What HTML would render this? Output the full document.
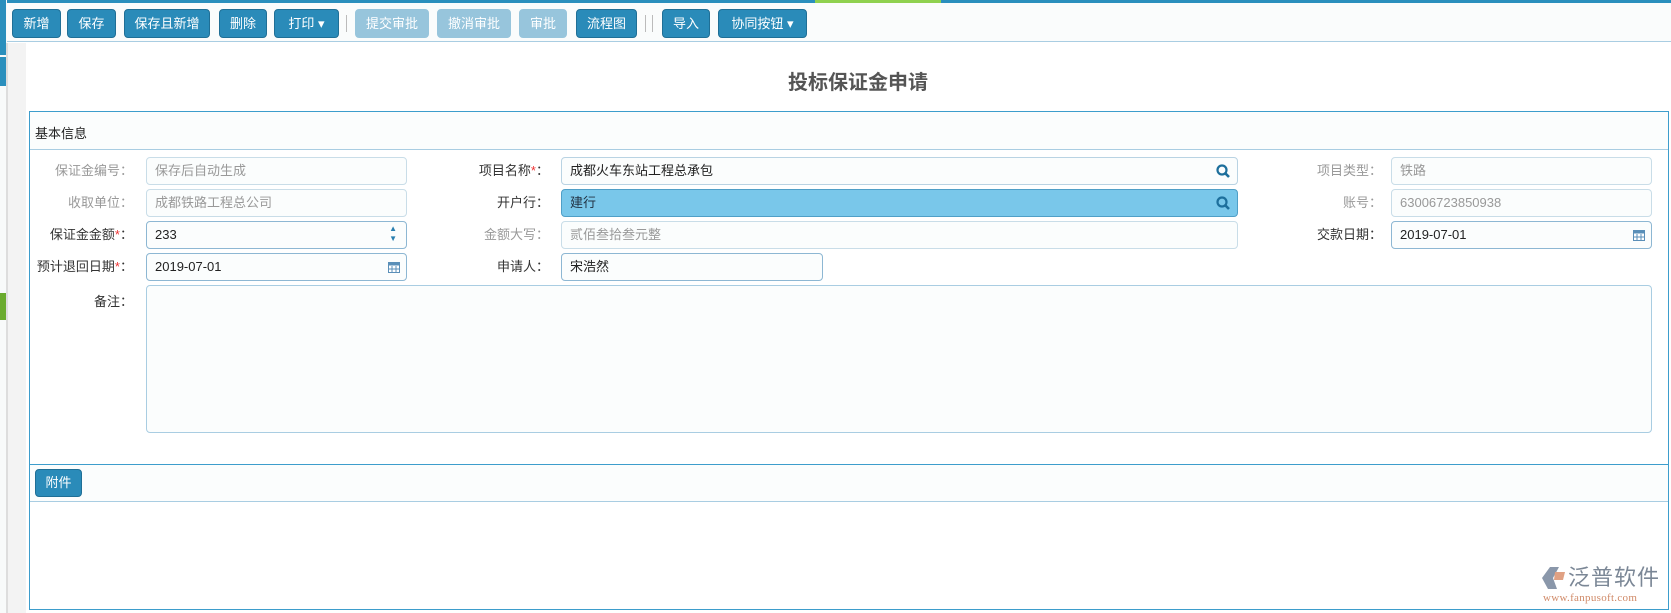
<!DOCTYPE html>
<html><head><meta charset="utf-8"><style>
*{box-sizing:border-box;margin:0;padding:0}
body{width:1671px;height:613px;overflow:hidden;background:#fff;position:relative;font-family:"Liberation Sans","Noto Sans CJK SC",sans-serif;font-size:13px;color:#333}
.a{position:absolute}
.btn{position:absolute;top:9px;height:29px;background:#2a8bb9;color:#fff;border-radius:4px;border:1px solid #1f6f96;font-size:13px;line-height:27px;text-align:center}
.dis{background:#97c5dc;border-color:#97c5dc}
.sep{position:absolute;top:15px;width:1px;height:17px;background:#bbb}
.lbl{position:absolute;text-align:right;width:130px;line-height:27px}
.g{color:#999}
.inp{position:absolute;height:28px;border:1px solid #c9dde8;border-radius:4px;background:#fbfdfd;line-height:26px;padding-left:8px;color:#999}
.act{border-color:#8db7d3;color:#222}
.star{color:#e33}
</style></head><body>
<div class="a" style="left:0;top:0;width:1671px;height:3px;background:#2a8fbd"></div>
<div class="a" style="left:815px;top:0;width:126px;height:3px;background:#8fd14f"></div>
<div class="a" style="left:0;top:3px;width:1671px;height:39px;background:#fafcfc;border-bottom:1px solid #a9cde2"></div>
<div class="a" style="left:0;top:0;width:7px;height:613px;background:#f8fafa"></div>
<div class="a" style="left:0;top:0;width:6px;height:55px;background:#2a8fbd"></div>
<div class="a" style="left:0;top:57px;width:6px;height:29px;background:#2a8fbd"></div>
<div class="a" style="left:0;top:293px;width:6px;height:27px;background:#6aab2e"></div>
<div class="a" style="left:6px;top:43px;width:20px;height:570px;background:#f3f3f3;border-left:2px solid #ddd"></div>

<div class="btn" style="left:12px;width:49px">新增</div>
<div class="btn" style="left:67px;width:49px">保存</div>
<div class="btn" style="left:124px;width:86px">保存且新增</div>
<div class="btn" style="left:219px;width:48px">删除</div>
<div class="btn" style="left:274px;width:65px">打印 ▾</div>
<div class="sep" style="left:346px"></div>
<div class="btn dis" style="left:355px;width:74px">提交审批</div>
<div class="btn dis" style="left:437px;width:74px">撤消审批</div>
<div class="btn dis" style="left:519px;width:48px">审批</div>
<div class="btn" style="left:576px;width:61px">流程图</div>
<div class="sep" style="left:645px"></div><div class="sep" style="left:652px"></div>
<div class="btn" style="left:662px;width:48px">导入</div>
<div class="btn" style="left:718px;width:89px">协同按钮 ▾</div>

<div class="a" style="left:26px;top:43px;width:1645px;height:570px;background:#fff"></div>
<div class="a" style="left:0;top:66px;width:1716px;text-align:center;font-size:20px;font-weight:bold;color:#555">投标保证金申请</div>

<div class="a" style="left:29px;top:111px;width:1640px;height:499px;border:1px solid #3d9dcc;background:#fff"></div>
<div class="a" style="left:30px;top:112px;width:1638px;height:38px;background:#fbfdfd;border-bottom:1px solid #a9cde2"></div>
<div class="a" style="left:35px;top:123px;font-size:13px;color:#222">基本信息</div>

<div class="lbl g" style="left:3px;top:157px">保证金编号：</div>
<div class="inp" style="left:146px;top:157px;width:261px">保存后自动生成</div>
<div class="lbl g" style="left:3px;top:189px">收取单位：</div>
<div class="inp" style="left:146px;top:189px;width:261px">成都铁路工程总公司</div>
<div class="lbl" style="left:3px;top:221px">保证金金额<span class="star">*</span>：</div>
<div class="inp act" style="left:146px;top:221px;width:261px">233<span class="a" style="right:9px;top:2px;font-size:8px;color:#2a7fb0;line-height:10px">▲<br>▼</span></div>
<div class="lbl" style="left:3px;top:253px">预计退回日期<span class="star">*</span>：</div>
<div class="inp act" style="left:146px;top:253px;width:261px">2019-07-01<svg class="a" style="right:6px;top:7px" width="12" height="12"><rect x="0.5" y="1.5" width="11" height="10" fill="#fff" stroke="#5a8fb8"/><rect x="0.5" y="1.5" width="11" height="3" fill="#5a8fb8"/><path d="M4 5v6M8 5v6M1 8h10" stroke="#5a8fb8"/></svg></div>
<div class="lbl" style="left:3px;top:288px">备注：</div>
<div class="inp" style="left:146px;top:285px;width:1506px;height:148px;border-color:#a9cde2"></div>

<div class="lbl" style="left:419px;top:157px">项目名称<span class="star">*</span>：</div>
<div class="inp act" style="left:561px;top:157px;width:677px;border-color:#b9d3e3">成都火车东站工程总承包<svg class="a" style="right:7px;top:6px" width="14" height="14"><circle cx="6" cy="6" r="4.5" fill="none" stroke="#1d6f9c" stroke-width="2.2"/><path d="M9.3 9.3l3.7 3.7" stroke="#1d6f9c" stroke-width="2.6"/></svg></div>
<div class="lbl" style="left:419px;top:189px">开户行：</div>
<div class="inp" style="left:561px;top:189px;width:677px;background:#79c7ea;border-color:#4f9fc7;color:#234">建行<svg class="a" style="right:7px;top:6px" width="14" height="14"><circle cx="6" cy="6" r="4.5" fill="none" stroke="#1d6f9c" stroke-width="2.2"/><path d="M9.3 9.3l3.7 3.7" stroke="#1d6f9c" stroke-width="2.6"/></svg></div>
<div class="lbl g" style="left:419px;top:221px">金额大写：</div>
<div class="inp" style="left:561px;top:221px;width:677px">贰佰叁拾叁元整</div>
<div class="lbl" style="left:419px;top:253px">申请人：</div>
<div class="inp act" style="left:561px;top:253px;width:262px">宋浩然</div>

<div class="lbl g" style="left:1252px;top:157px">项目类型：</div>
<div class="inp" style="left:1391px;top:157px;width:261px">铁路</div>
<div class="lbl g" style="left:1252px;top:189px">账号：</div>
<div class="inp" style="left:1391px;top:189px;width:261px">63006723850938</div>
<div class="lbl" style="left:1252px;top:221px">交款日期：</div>
<div class="inp act" style="left:1391px;top:221px;width:261px">2019-07-01<svg class="a" style="right:6px;top:7px" width="12" height="12"><rect x="0.5" y="1.5" width="11" height="10" fill="#fff" stroke="#5a8fb8"/><rect x="0.5" y="1.5" width="11" height="3" fill="#5a8fb8"/><path d="M4 5v6M8 5v6M1 8h10" stroke="#5a8fb8"/></svg></div>

<div class="a" style="left:30px;top:464px;width:1638px;height:38px;background:#fbfdfd;border-top:1px solid #3d9dcc;border-bottom:1px solid #a9cde2"></div>
<div class="btn" style="left:35px;top:469px;width:47px;height:28px;line-height:26px">附件</div>

<svg class="a" style="left:1541px;top:566px" width="26" height="24"><path d="M9 1h9l-6 11 4 11H7L1 12z" fill="#8a97aa"/><path d="M14 6h10l-2 8h-9z" fill="#e0a183"/></svg>
<div class="a" style="left:1568px;top:562px;font-size:22px;color:#7b8796;font-family:'Noto Sans CJK SC',sans-serif;line-height:28px;letter-spacing:1px">泛普软件</div>
<div class="a" style="left:1543px;top:592px;font-size:11px;color:#d08a68;font-family:'Liberation Serif',serif;letter-spacing:0.3px">www.fanpusoft.com</div>
</body></html>
